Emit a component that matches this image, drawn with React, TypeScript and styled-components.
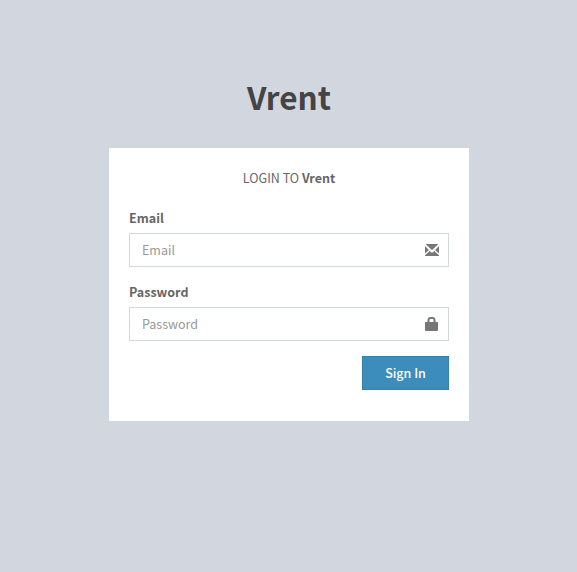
import React from "react";
import styled, { createGlobalStyle } from "styled-components";

const GlobalStyle = createGlobalStyle`
  * { box-sizing: border-box; }
  body {
    margin: 0;
    padding-left: 1px;
    background: #d2d6de;
    color: #666;
    font-family: "Noto Sans CJK SC", "Noto Sans", sans-serif;
    font-size: 12.5px;
    line-height: 20px;
  }
`;

const Page = styled.main`
  width: 360px;
  min-height: 572px;
  margin: 0 auto;
  padding-top: 71px;
`;

const Logo = styled.h1`
  height: 50px;
  margin: 0 0 27px;
  color: #444;
  font-size: 31.5px;
  font-weight: 700;
  line-height: 50px;
  text-align: center;
`;

const Card = styled.section`
  height: 273px;
  padding: 20px;
  background: #fff;
`;

const Message = styled.p`
  margin: 0 0 20px;
  text-align: center;
`;

const Field = styled.div`
  height: 59px;
  margin-bottom: 15px;
`;

const Label = styled.label`
  display: block;
  margin-bottom: 5px;
  font-weight: 700;
`;

const InputFrame = styled.div`
  display: flex;
  align-items: center;
  height: 34px;
  padding: 0 9px 0 12px;
  border: 1px solid #d2d6de;
  color: #777;
`;

const Input = styled.input`
  flex: 1;
  min-width: 0;
  height: 32px;
  padding: 0 0 2px;
  border: 0;
  outline: 0;
  background: transparent;
  color: #555;
  font: inherit;
  &::placeholder { color: #999; opacity: 1; }
`;

const Icon = styled.svg`
  flex: none;
  width: 14px;
  height: 14px;
`;

const Actions = styled.div`
  display: flex;
  justify-content: flex-end;
`;

const Button = styled.button`
  width: 87px;
  height: 34px;
  padding: 0;
  border: 1px solid #367fa9;
  background: #3c8dbc;
  color: #fff;
  font: inherit;
  font-weight: 500;
`;

export default function App() {
  return (
    <>
      <GlobalStyle />
      <Page>
        <Logo>Vrent</Logo>
        <Card>
          <Message>LOGIN TO <b>Vrent</b></Message>
          <form onSubmit={(e) => e.preventDefault()}>
            <Field>
              <Label htmlFor="email">Email</Label>
              <InputFrame>
                <Input id="email" type="email" placeholder="Email" />
                <Icon viewBox="0 0 14 14" fill="currentColor" aria-hidden="true">
                  <path d="M.6 1h12.8L7 7.3zM0 3l3.9 3.9L0 10.4zM14 3v7.4l-3.9-3.5zM4.8 7.9 7 10l2.2-2.1L14 12.3v.7H0v-.7z" />
                </Icon>
              </InputFrame>
            </Field>
            <Field>
              <Label htmlFor="password">Password</Label>
              <InputFrame>
                <Input id="password" type="password" placeholder="Password" />
                <Icon viewBox="0 0 14 14" fill="currentColor" aria-hidden="true">
                  <path fillRule="evenodd" d="M0 5h2.5V3C2.5 1.1 3.7 0 5.5 0h2c1.8 0 3 1.1 3 3v2H13v8q0 1-1 1H1q-1 0-1-1zM4.5 5h4V3q0-1-1-1h-2q-1 0-1 1z" />
                </Icon>
              </InputFrame>
            </Field>
            <Actions>
              <Button type="submit">Sign In</Button>
            </Actions>
          </form>
        </Card>
      </Page>
    </>
  );
}
